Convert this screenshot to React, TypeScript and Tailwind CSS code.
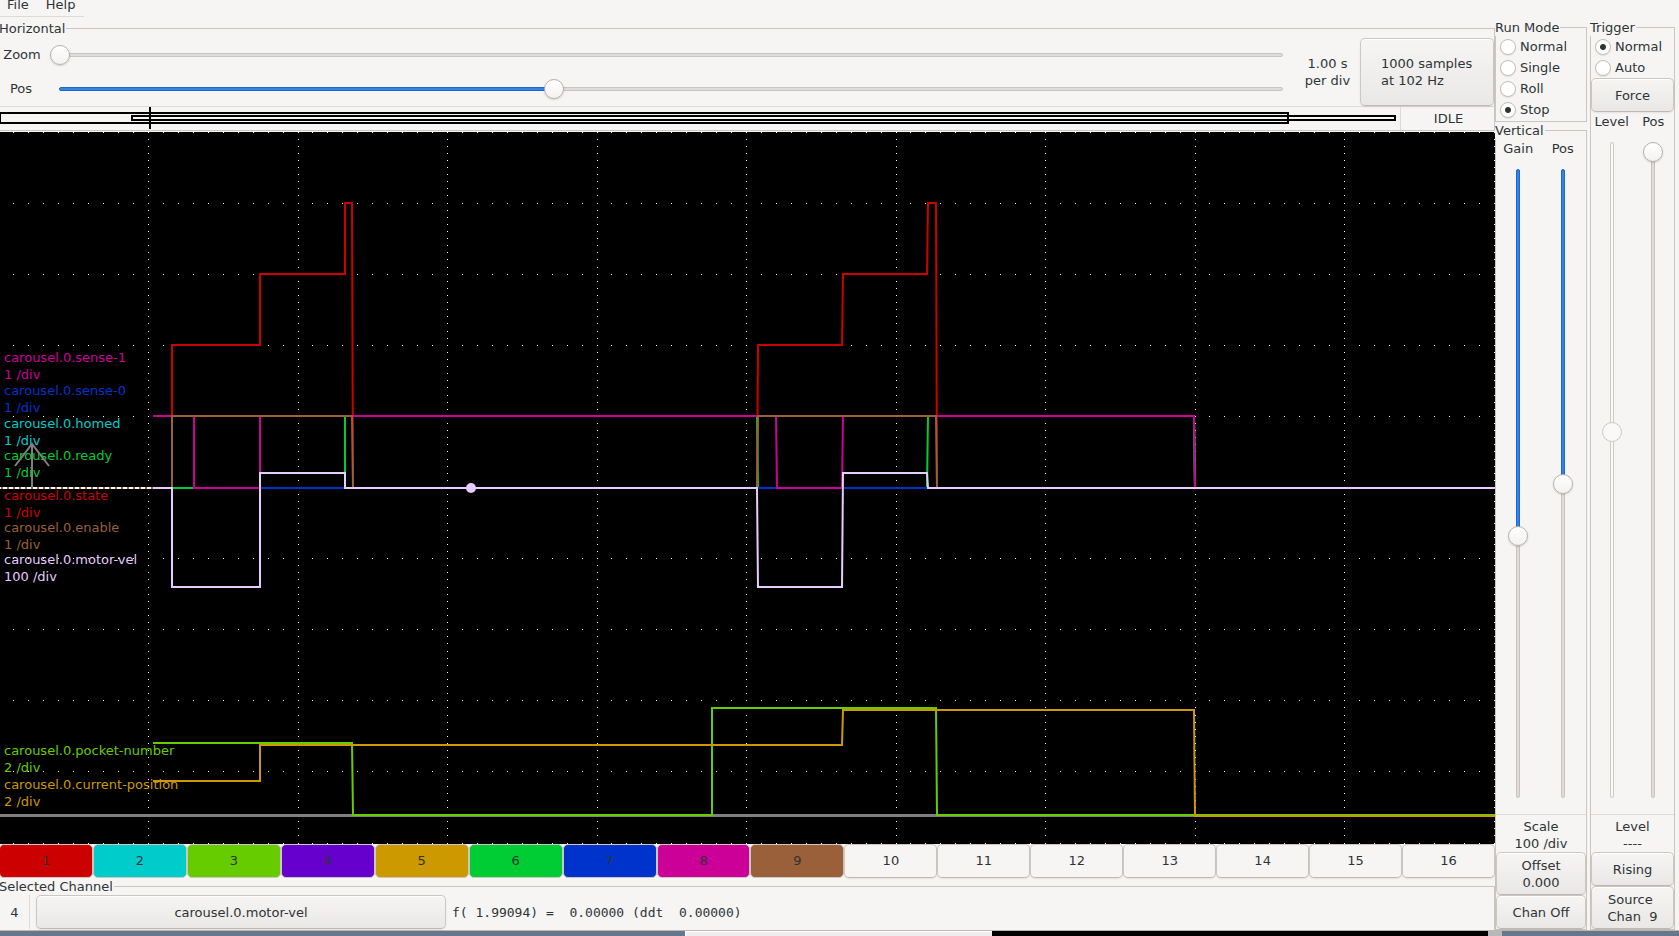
import type { ReactNode } from "react";

import clsx from "clsx";

const channels = [
  "bg-[#cc0000]",
  "bg-[#00cccc]",
  "bg-[#66cc00]",
  "bg-[#6600cc]",
  "bg-[#cc9900]",
  "bg-[#00cc33]",
  "bg-[#0033cc]",
  "bg-[#cc0099]",
  "bg-[#996039]",
  ...Array<string>(7).fill(""),
];

const upperLabels = [
  { name: "carousel.0.sense-1", scale: "1 /div", color: "text-[#cc0099]" },
  { name: "carousel.0.sense-0", scale: "1 /div", color: "text-[#0033cc]" },
  { name: "carousel.0.homed", scale: "1 /div", color: "text-[#00cccc]" },
  { name: "carousel.0.ready", scale: "1 /div", color: "text-[#00cc33]" },
];

const middleLabels = [
  { name: "carousel.0.state", scale: "1 /div", color: "text-[#cc0000]" },
  { name: "carousel.0.enable", scale: "1 /div", color: "text-[#996039]" },
  { name: "carousel.0.motor-vel", scale: "100 /div", color: "text-[#e6ccff]" },
];

const lowerLabels = [
  { name: "carousel.0.pocket-number", scale: "2 /div", color: "text-[#66cc00]" },
  { name: "carousel.0.current-position", scale: "2 /div", color: "text-[#cc9900]" },
];

// Drawn in channel order, the selected channel goes last
const traces = [
  {
    color: "#cc0000",
    points:
      "153,356 172,356 172,213 260,213 260,142 345,142 345,71 352,71 353,356 757,356 758,213 842,213 843,142 927,142 928,71 936,71 937,356 1495,356",
  },
  { color: "#00cccc", points: "153,284 1194,284 1195,356 1495,356" },
  {
    color: "#66cc00",
    points: "153,611 352,611 353,683 712,683 712,576 936,576 937,683 1495,683",
  },
  {
    color: "#cc9900",
    points: "153,649 260,649 260,613 842,613 843,578 1194,578 1195,684 1495,684",
  },
  {
    color: "#00cc33",
    points:
      "153,284 172,284 172,356 345,356 345,284 757,284 758,356 927,356 928,284 1194,284 1195,356 1495,356",
  },
  {
    color: "#0033cc",
    points: "153,284 260,284 260,356 1495,356",
  },
  {
    color: "#cc0099",
    points:
      "153,284 194,284 194,356 260,356 260,284 776,284 777,356 842,356 843,284 1194,284 1195,356 1495,356",
  },
  {
    color: "#996039",
    points:
      "153,356 172,356 172,284 352,284 353,356 757,356 758,284 936,284 937,356 1495,356",
  },
  {
    color: "#e6ccff",
    points:
      "153,356 172,356 172,455 260,455 260,341 345,341 345,356 757,356 758,455 842,455 843,341 927,341 928,356 1495,356",
  },
];

const dotX = (n: number) => Math.round(n * 14.95 - 1.5);
const dotY = (n: number) => Math.floor(n * 7.11);

const gridPath = () => {
  const dots: string[] = [];
  for (let row = 0; row <= 10; row++) {
    for (let n = 1; n <= 100; n++) {
      dots.push(`M${dotX(n)} ${dotY(row * 10)}h1v1h-1z`);
    }
  }
  for (let col = 1; col <= 10; col++) {
    for (let n = 0; n <= 100; n++) {
      dots.push(`M${dotX(col * 10)} ${dotY(n)}h1v1h-1z`);
    }
  }
  return dots.join("");
};

const raised =
  "rounded-[5px] border border-[#cdc7c2] border-b-[#bfb8b1] bg-linear-to-b from-[#f6f5f4] to-[#eae8e6] shadow-[inset_0_1px_#fff,0_1px_2px_rgba(0,0,0,0.08)]";

type SliderProps = {
  label: string;
  value: number;
  vertical?: boolean;
  filled?: boolean;
  disabled?: boolean;
};

const Slider = ({ label, value, vertical, filled, disabled }: SliderProps) => (
  <div
    className={clsx(
      "grid place-items-center",
      vertical ? "h-full w-5 justify-self-center" : "w-full h-5"
    )}
  >
    <div
      className={clsx(
        "col-start-1 row-start-1 flex rounded-sm border",
        vertical ? "w-1 h-full flex-col" : "h-1 w-full",
        disabled
          ? "border-[#cdcac4] bg-[#faf9f8]"
          : "border-[#c9c4bf] bg-[#dfdbd7]"
      )}
    >
      {filled && (
        <div
          className="-m-px rounded-sm border border-[#1b6acb] bg-[#3584e4]"
          style={vertical ? { height: `${value}%` } : { width: `${value}%` }}
        />
      )}
    </div>
    <input
      type="range"
      aria-label={label}
      defaultValue={value}
      step="any"
      disabled={disabled}
      className={clsx(
        "col-start-1 row-start-1 appearance-none bg-transparent",
        "[&::-webkit-slider-thumb]:appearance-none [&::-webkit-slider-thumb]:size-5 [&::-webkit-slider-thumb]:rounded-full [&::-webkit-slider-thumb]:border",
        vertical
          ? "[writing-mode:vertical-lr] w-5 h-full"
          : "h-5 w-[calc(100%+18px)]",
        disabled
          ? "[&::-webkit-slider-thumb]:border-[#cdcac4] [&::-webkit-slider-thumb]:bg-[#faf9f8]"
          : "[&::-webkit-slider-thumb]:border-[#b9b1aa] [&::-webkit-slider-thumb]:bg-linear-to-b [&::-webkit-slider-thumb]:from-white [&::-webkit-slider-thumb]:to-[#f3f2f1] [&::-webkit-slider-thumb]:shadow-[0_1px_2px_rgba(0,0,0,0.15)]"
      )}
    />
  </div>
);

const Radio = ({ name, label, checked }: { name: string; label: string; checked?: boolean }) => (
  <label className="flex items-center gap-1 h-[21px] pl-1">
    <input
      type="radio"
      name={name}
      defaultChecked={checked}
      className="size-4 shrink-0 appearance-none rounded-full border border-[#c4bdb6] bg-white shadow-[0_1px_1px_rgba(0,0,0,0.08)] checked:bg-[radial-gradient(circle,#2e3436_2.5px,#fdfdfd_3.5px)]"
    />
    {label}
  </label>
);

const Frame = ({ title, className, children }: { title: string; className?: string; children: ReactNode }) => (
  <fieldset className={clsx("min-w-0 border-[#cac6c0]", className)}>
    <legend className="-ml-px pr-px">{title}</legend>
    {children}
  </fieldset>
);

const TraceLabels = ({ labels, className }: { labels: typeof upperLabels; className: string }) => (
  <div className={clsx("absolute left-1 whitespace-pre", className)}>
    {labels.map(({ name, scale, color }) => (
      <p key={name} className={color}>
        {name}
        <br />
        {scale}
      </p>
    ))}
  </div>
);

const Horizontal = () => (
  <Frame title="Horizontal" className="border-y border-r">
    <div className="flex h-[70px] border-b border-[#dddad7]">
      <div className="grid flex-1 grid-cols-[44px_1fr] grid-rows-[34px_34px] items-center gap-x-[15px] pt-px pr-[10px]">
        <span className="pb-0.5 text-center">Zoom</span>
        <Slider label="Zoom" value={0} />
        <span className="pr-0.5 pb-0.5 text-center">Pos</span>
        <Slider label="Pos" value={40.4} filled />
      </div>
      <p className="w-[67px] self-center pl-0.5 text-center">
        1.00 s<br />
        per div
      </p>
      <button className={clsx("w-[134px] mt-px pl-5 text-left", raised)}>
        1000 samples
        <br />
        at 102 Hz
      </button>
    </div>
    <div className="flex h-[23px]">
      <svg
        className="h-full min-w-0 flex-1"
        viewBox="0 0 1400 23"
        preserveAspectRatio="none"
        fill="none"
        stroke="#000"
        strokeWidth="2"
      >
        <rect x="0" y="6" width="1288" height="10" />
        <rect x="132" y="9" width="1263" height="4" />
        <path d="M150 0V22" />
      </svg>
      <p className="w-[94px] border-l border-[#dddad7] pt-[3px] pl-0.5 text-center">IDLE</p>
    </div>
  </Frame>
);

const Plot = () => (
  <div className="relative mt-px min-h-0 flex-1 overflow-hidden bg-black">
    <TraceLabels
      labels={upperLabels}
      className="top-[217px] [&>p]:h-[33px] [&>p:nth-child(3)]:h-[32px]"
    />
    <TraceLabels labels={middleLabels} className="top-[355px] [&>p]:h-[32px]" />
    <TraceLabels labels={lowerLabels} className="top-[610px] [&>p]:h-[34px]" />
    <svg
      className="absolute inset-0 size-full"
      viewBox="0 0 1495 712"
      preserveAspectRatio="none"
      fill="none"
      strokeWidth="2"
    >
      <path d={gridPath()} fill="#fff" />
      <path d="M0 683.5H1495" stroke="#808080" strokeWidth="3" />
      <path d="M32 356V312M15 334L32 312L49 334" stroke="#808080" />
      <path d="M0 356H153" stroke="#996039" />
      <path d="M0 356H153" stroke="#fff" strokeDasharray="4 2" strokeDashoffset="3" />
      {traces.map(({ color, points }) => (
        <polyline key={color} points={points} stroke={color} />
      ))}
      <circle cx="471" cy="356" r="5" fill="#e6ccff" />
    </svg>
  </div>
);

const Channels = () => (
  <div className="-ml-px grid grid-cols-[repeat(9,94fr)_repeat(7,93fr)]">
    {channels.map((color, i) => (
      <button
        key={i}
        className={clsx(
          "h-[34px] rounded-[5px] border border-[#cdc7c2] pb-0.5",
          color || "bg-[#f6f5f4] border-b-[#bfb8b1] shadow-[0_1px_2px_rgba(0,0,0,0.08)]"
        )}
      >
        {i + 1}
      </button>
    ))}
  </div>
);

const SelectedChannel = () => (
  <Frame title="Selected Channel" className="border-t border-r">
    <div className="flex h-[35px] items-stretch pb-px">
      <span className="w-[30px] content-center border-r border-[#dddad7] text-center">4</span>
      <button className={clsx("ml-[6px] w-[410px]", raised)}>carousel.0.motor-vel</button>
      <output className="ml-[6px] content-center whitespace-pre font-['DejaVu_Sans_Mono',monospace]">
        {"f( 1.99094) =  0.00000 (ddt  0.00000)"}
      </output>
    </div>
  </Frame>
);

const Vertical = () => (
  <Frame title="Vertical" className="flex min-h-0 flex-1 flex-col border">
    <div className="flex h-full flex-col pt-px">
      <div className="grid grid-cols-2 pr-px text-center">
        <span>Gain</span>
        <span>Pos</span>
      </div>
      <div className="grid min-h-0 flex-1 grid-cols-[44px_1fr] pt-3 pb-4">
        <Slider label="Gain" value={58.6} vertical filled />
        <Slider label="Vertical position" value={50} vertical filled />
      </div>
      <p className="border-t border-[#dddad7] pt-[3px] text-center">
        Scale
        <br />
        100 /div
      </p>
      <button className={clsx("h-[43px]", raised)}>
        Offset
        <br />
        0.000
      </button>
      <button className={clsx("h-[34px]", raised)}>Chan Off</button>
    </div>
  </Frame>
);

const Trigger = () => (
  <Frame title="Trigger" className="w-[85px] border">
    <div className="flex h-full flex-col">
      <Radio name="trigger" label="Normal" checked />
      <Radio name="trigger" label="Auto" />
      <button className={clsx("h-[34px]", raised)}>Force</button>
      <div className="grid grid-cols-2 pt-px text-center">
        <span>Level</span>
        <span>Pos</span>
      </div>
      <div className="grid min-h-0 flex-1 grid-cols-2 pt-3 pb-4">
        <Slider label="Trigger level" value={44} vertical disabled />
        <Slider label="Trigger position" value={0} vertical />
      </div>
      <p className="border-t border-[#dddad7] pt-[3px] text-center">
        Level
        <br />
        ----
      </p>
      <button className={clsx("h-[34px]", raised)}>Rising</button>
      <button className={clsx("h-[43px] whitespace-pre", raised)}>{"Source \nChan  9"}</button>
    </div>
  </Frame>
);

const App = () => (
  <div className="flex h-screen flex-col overflow-hidden bg-[#f6f5f4] font-['DejaVu_Sans',sans-serif] text-[13px] leading-[17px] text-[#2e3436]">
    <div className="flex min-h-0 flex-1 border-b border-[#bfb8b1]">
      <main className="flex min-w-0 flex-1 flex-col">
        <nav className="-mt-1 mb-[3px] flex h-[21px] w-[84px] gap-[17px] border-b border-[#dddad7] pl-[7px]">
          <a href="#file">File</a>
          <a href="#help">Help</a>
        </nav>
        <Horizontal />
        <Plot />
        <Channels />
        <SelectedChannel />
      </main>
      <aside className="flex gap-[3px] pt-[19px] pr-1">
        <div className="flex w-[92px] flex-col">
          <Frame title="Run Mode" className="border pb-px">
            <Radio name="run" label="Normal" />
            <Radio name="run" label="Single" />
            <Radio name="run" label="Roll" />
            <Radio name="run" label="Stop" checked />
          </Frame>
          <Vertical />
        </div>
        <Trigger />
      </aside>
    </div>
    <div className="flex h-[5px] bg-[#66778d]">
      <div className="w-[685px] shrink-0" />
      <div className="w-[307px] border-t border-l border-white bg-[#eeeeee]" />
      <div className="flex-1 bg-black" />
      <div className="w-[14px] bg-[#b8b8b8]" />
      <div className="w-[177px]" />
    </div>
  </div>
);

export default App;
